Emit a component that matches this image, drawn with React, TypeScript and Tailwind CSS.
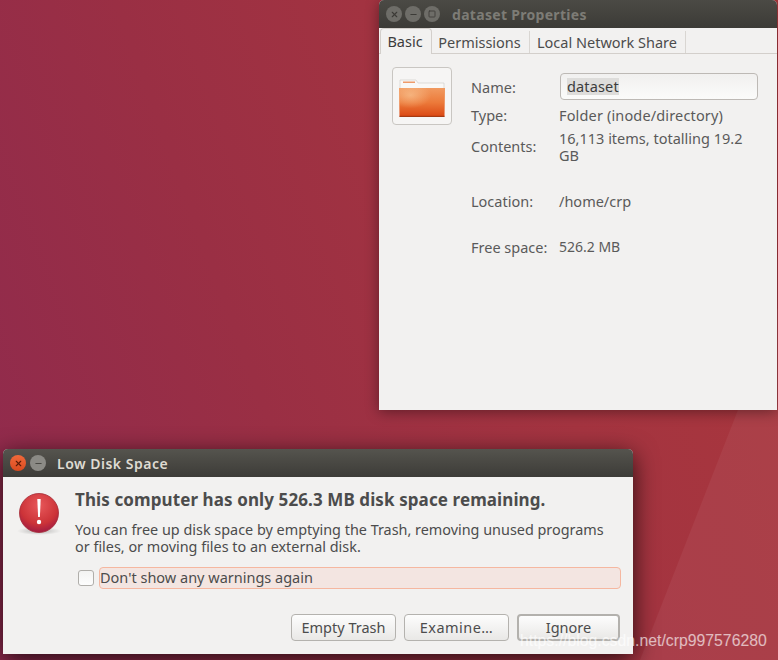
import { X, Minus, Square } from "lucide-react";

const font = "font-['Noto_Sans','Open_Sans',sans-serif]";

function FolderIcon() {
  return (
    <svg width="48" height="42" viewBox="0 0 48 42">
      <defs>
        <linearGradient id="folderBody" x1="0" y1="0" x2="0" y2="1">
          <stop offset="0" stopColor="#f19a60" />
          <stop offset="0.5" stopColor="#ec7a3a" />
          <stop offset="1" stopColor="#da4612" />
        </linearGradient>
        <radialGradient id="folderGlow" cx="0.25" cy="0.25" r="0.45">
          <stop offset="0" stopColor="#fbd3a4" stopOpacity="0.55" />
          <stop offset="1" stopColor="#fbd3a4" stopOpacity="0" />
        </radialGradient>
      </defs>
      <path d="M2 5h16l2 3h26v6H2z" fill="#f9f8f6" stroke="#cfcbc6" strokeWidth="0.6" />
      <rect x="5" y="6.500" width="12" height="1.500" fill="#ee9a68" />
      <path d="M1 13h46l-.5 28a1 1 0 0 1-1 1H2.500a1 1 0 0 1-1-1z" fill="url(#folderBody)" />
      <path d="M1 13h46l-.5 28a1 1 0 0 1-1 1H2.500a1 1 0 0 1-1-1z" fill="url(#folderGlow)" />
      <rect x="1.500" y="40.800" width="45" height="1.200" fill="#a63a12" />
    </svg>
  );
}

function ErrorIcon() {
  return (
    <svg width="44" height="46" viewBox="0 0 44 46">
      <defs>
        <radialGradient id="errBall" cx="0.5" cy="0.3" r="0.8">
          <stop offset="0" stopColor="#e8585a" />
          <stop offset="0.6" stopColor="#cc3338" />
          <stop offset="1" stopColor="#8f1146" />
        </radialGradient>
        <radialGradient id="errShadow">
          <stop offset="0" stopColor="#000" stopOpacity="0.25" />
          <stop offset="1" stopColor="#000" stopOpacity="0" />
        </radialGradient>
      </defs>
      <ellipse cx="22" cy="40" rx="22" ry="4" fill="url(#errShadow)" />
      <circle cx="22" cy="22" r="19.500" fill="url(#errBall)" stroke="#a52a35" strokeWidth="0.8" />
      <path d="M20.300 8h3.400l-0.800 18h-1.800z" fill="#fff" />
      <circle cx="22" cy="31" r="2.200" fill="#fff" />
    </svg>
  );
}

function PropertiesWindow() {
  return (
    <div className="absolute left-[379px] top-0 w-[398px] h-[410px] bg-[#f2f1f0] flex flex-col rounded-t-[5px] shadow-[0_2px_14px_rgba(0,0,0,0.4)]">
      <div className="h-[28px] bg-gradient-to-b from-[#4b4a45] to-[#3c3b37] rounded-t-[5px] flex items-center pl-[7px] shrink-0">
        <div className="flex gap-[3px]">
          <span className="w-[16px] h-[16px] rounded-full bg-[#6e6d68] flex items-center justify-center text-[#3c3b37]">
            <X size={9} strokeWidth={3} />
          </span>
          <span className="w-[16px] h-[16px] rounded-full bg-[#6e6d68] flex items-center justify-center text-[#3c3b37]">
            <Minus size={9} strokeWidth={3} />
          </span>
          <span className="w-[16px] h-[16px] rounded-full bg-[#6e6d68] flex items-center justify-center text-[#3c3b37]">
            <Square size={8} strokeWidth={2.500} />
          </span>
        </div>
        <span className="ml-[12px] text-[14px] font-bold text-[#7d7c76] tracking-[0.3px]">dataset Properties</span>
      </div>
      <div className="h-[26px] flex items-end border-b border-[#d3cfcb] text-[14.5px] text-[#4c4c4c] shrink-0">
        <div className="h-[26px] w-[52px] -mb-px ml-px pr-[2px] bg-[#f2f1f0] border border-b-0 border-[#d3cfcb] rounded-t-[4px] flex items-center justify-center text-[#3c3c3c]">
          Basic
        </div>
        <div className="h-[22px] w-[98px] pt-[2px] pr-[2px] border-r border-[#d9d6d2] flex items-center justify-center">Permissions</div>
        <div className="h-[22px] w-[156px] pt-[2px] pr-[1px] border-r border-[#d9d6d2] flex items-center justify-center">Local Network Share</div>
      </div>
      <div className="flex pl-[13px] pt-[13px]">
        <div className="w-[60px] h-[58px] border border-[#c9c6c2] rounded-[4px] bg-[#f6f5f4] flex items-center justify-center shrink-0">
          <FolderIcon />
        </div>
        <div className="ml-[19px] mt-[6px] w-[287px] grid grid-cols-[88px_1fr] text-[14.5px] leading-[18px] text-[#5a5a5a]">
          <div className="h-[27px] flex items-center">Name:</div>
          <div className="h-[27px] border border-[#bdb9b5] rounded-[4px] bg-gradient-to-b from-[#f1f0ef] to-[#fbfbfa] ml-px flex items-center pl-[6px] text-[#3c3c3c]">
            <span className="bg-[#dedddb] leading-[17px] tracking-[0.15px]">dataset</span>
          </div>
          <div className="mt-[6px]">Type:</div>
          <div className="mt-[6px] tracking-[0.15px]">Folder (inode/directory)</div>
          <div className="mt-[13px] h-[36px]">Contents:</div>
          <div className="mt-[6px] leading-[17px]">16,113 items, totalling 19.2 GB</div>
          <div className="mt-[19px]">Location:</div>
          <div className="mt-[19px]">/home/crp</div>
          <div className="mt-[28px]">Free space:</div>
          <div className="mt-[28px] text-[14px]">526.2 MB</div>
        </div>
      </div>
    </div>
  );
}

function DialogButton({ label, focused, wide }: { label: string; focused?: boolean; wide?: boolean }) {
  return (
    <button
      className={
        "h-[27px] pt-[1px] rounded-[4px] bg-gradient-to-b from-[#fdfdfd] to-[#e9e8e6] text-[14.5px] text-[#4c4c4c] flex items-center justify-center " +
        (focused ? "w-[103px] border-2 border-[#b3b1ad]" : "w-[105px] border border-[#b4b2ae]") +
        (wide ? " tracking-[0.45px]" : "")
      }
    >
      {label}
    </button>
  );
}

function LowDiskDialog() {
  return (
    <div className="absolute left-[3px] top-[449px] w-[630px] h-[205px] bg-[#f2f1f0] flex flex-col rounded-t-[5px] shadow-[0_6px_24px_rgba(0,0,0,0.75)]">
      <div className="h-[28px] bg-gradient-to-b from-[#55544e] to-[#3d3c38] rounded-t-[5px] flex items-center pl-[7px] shrink-0">
        <div className="flex gap-[4px]">
          <span className="w-[16px] h-[16px] rounded-full bg-gradient-to-b from-[#f0693a] to-[#d94a1e] flex items-center justify-center text-[#5a1c08]">
            <X size={9} strokeWidth={3} />
          </span>
          <span className="w-[16px] h-[16px] rounded-full bg-[#8b8a85] flex items-center justify-center text-[#4a4944]">
            <Minus size={9} strokeWidth={3} />
          </span>
        </div>
        <span className="ml-[11px] text-[14px] font-semibold text-[#dfdbd2] tracking-[0.5px]">Low Disk Space</span>
      </div>
      <div className="flex pl-[14px] pt-[14px]">
        <div className="w-[44px] shrink-0">
          <ErrorIcon />
        </div>
        <div className="ml-[14px] w-[546px]">
          <p className="-mt-px text-[17px] leading-[20px] font-bold text-[#4c4c4c] tracking-[0.1px]">This computer has only 526.3 MB disk space remaining.</p>
          <p className="mt-[11px] text-[14.4px] leading-[17px] text-[#4c4c4c]">
            You can free up disk space by emptying the Trash, removing unused programs
            <br />
            or files, or moving files to an external disk.
          </p>
          <div className="mt-[12px] flex items-center">
            <span className="w-[16px] h-[16px] ml-[3px] border border-[#b0aeaa] rounded-[3px] bg-gradient-to-b from-[#f3f3f2] to-[#fdfdfd] shrink-0" />
            <span className="ml-[5px] h-[22px] w-[522px] flex items-center border border-[#f5b7a0] rounded-[4px] bg-[#f3e5e1] text-[14.5px] text-[#4c4c4c]">
              Don't show any warnings again
            </span>
          </div>
        </div>
      </div>
      <div className="flex justify-end gap-[8px] pr-[13px] mt-[25px]">
        <DialogButton label="Empty Trash" />
        <DialogButton label="Examine…" wide />
        <DialogButton label="Ignore" focused />
      </div>
    </div>
  );
}

export default function App() {
  return (
    <div
      className={
        font +
        " relative w-[778px] h-[660px] overflow-hidden bg-[linear-gradient(70deg,#8f2a4e_0%,#9a2f44_35%,#a43440_65%,#aa373c_100%)]"
      }
    >
      {/* light wedge of the wallpaper, bottom right */}
      <div className="absolute inset-0 bg-white/5 [clip-path:polygon(778px_308px,778px_660px,640px_660px)]" />
      <PropertiesWindow />
      <LowDiskDialog />
      <span className="absolute left-[520px] top-[631px] font-['Liberation_Sans',sans-serif] text-[15.8px] leading-[20px] text-white/65">
        https://blog.csdn.net/crp997576280
      </span>
    </div>
  );
}
